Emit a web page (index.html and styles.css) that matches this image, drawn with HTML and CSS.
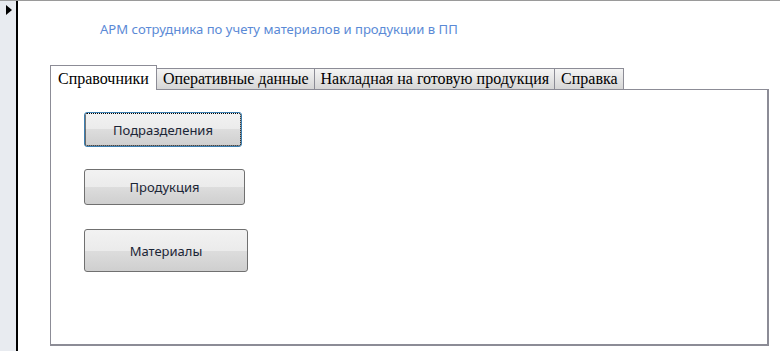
FILE: index.html
```html
<!DOCTYPE html>
<html lang="ru">
<head>
<meta charset="utf-8">
<title>АРМ</title>
<link rel="stylesheet" href="styles.css">
</head>
<body>
<div class="app">
  <div class="selector"><span class="arrow"></span></div>
  <main class="form">
    <h1 class="title">АРМ сотрудника по учету материалов и продукции в ПП</h1>
    <div class="tabs">
      <div class="tabbar">
        <div class="tab active">Справочники</div>
        <div class="tab">Оперативные данные</div>
        <div class="tab">Накладная на готовую продукция</div>
        <div class="tab">Справка</div>
      </div>
      <div class="panel">
        <button class="btn btn-1 focused">Подразделения</button>
        <button class="btn btn-2">Продукция</button>
        <button class="btn btn-3">Материалы</button>
      </div>
    </div>
  </main>
</div>
</body>
</html>
```
FILE: styles.css
```css
html, body {
  margin: 0;
  padding: 0;
  background: #ffffff;
}
.app {
  display: flex;
  height: 351px;
  box-sizing: border-box;
  border-top: 1px solid #9a9a9a;
  overflow: hidden;
}
.selector {
  width: 16px;
  flex: 0 0 16px;
  background: #e8ebf0;
  border-right: 2px solid #000000;
  padding-top: 4px;
  box-sizing: content-box;
}
.arrow {
  display: block;
  width: 0;
  height: 0;
  margin-left: 6px;
  border-left: 6px solid #000;
  border-top: 5px solid transparent;
  border-bottom: 5px solid transparent;
}
.form {
  flex: 1;
  display: flex;
  flex-direction: column;
  padding-top: 19px;
}
.title {
  margin: 0 0 0 82px;
  font-family: "Noto Sans", "Open Sans", sans-serif;
  font-weight: normal;
  font-size: 13.1px;
  line-height: 18px;
  color: #5b8ad6;
}
.tabs {
  margin-left: 32px;
  margin-top: 27px;
  width: 719px;
}
.tabbar {
  display: flex;
  align-items: flex-end;
  height: 24px;
  position: relative;
  z-index: 1;
}
.tab {
  box-sizing: border-box;
  height: 21px;
  border: 1px solid #8c8c96;
  border-bottom: none;
  border-left: none;
  background: linear-gradient(#f4f4f4, #d6d6d6);
  font-family: "Liberation Serif", "DejaVu Serif", serif;
  font-size: 16px;
  line-height: 20px;
  color: #000;
  padding: 0 5px 0 6px;
  white-space: nowrap;
}
.tab.active {
  height: 25px;
  margin-bottom: -1px;
  background: #ffffff;
  border-left: 1px solid #8c8c96;
  padding: 3px 7px 0 7px;
  line-height: 20px;
}
.panel {
  box-sizing: border-box;
  height: 257px;
  border-top: 1px solid #8c8c96;
  border-left: 1px solid #8c8c96;
  border-right: 2px solid #8c8c96;
  border-bottom: 2px solid #8c8c96;
  padding: 22px 0 0 33px;
  display: flex;
  flex-direction: column;
  align-items: flex-start;
}
.btn {
  box-sizing: border-box;
  border: 1px solid #707070;
  border-radius: 3px;
  background: linear-gradient(#f2f2f2 0%, #ebebeb 50%, #dddddd 50%, #cfcfcf 100%);
  font-family: "Noto Sans", "Open Sans", sans-serif;
  font-size: 13px;
  color: #1b2536;
  padding: 0;
  margin: 0;
}
.btn-1 {
  width: 158px;
  height: 35px;
}
.btn-2 {
  width: 161px;
  height: 36px;
  margin-top: 22px;
}
.btn-3 {
  width: 164px;
  height: 43px;
  margin-top: 24px;
}
.focused {
  border-color: #3c7fb1;
  outline: 1px dotted #000;
  outline-offset: -2px;
}
```
